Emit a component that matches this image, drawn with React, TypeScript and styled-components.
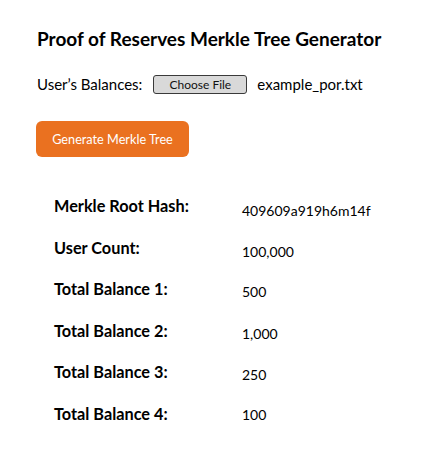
import React from "react";
import styled, { createGlobalStyle } from "styled-components";

const Global = createGlobalStyle`
  html, body { margin: 0; padding: 0; background: #ffffff; }
  body { font-family: Lato, "Open Sans", sans-serif; color: #000; }
`;

const Page = styled.div`
  padding: 27px 0 0 37px;
  width: 427px;
  height: 465px;
  box-sizing: border-box;
`;

const Title = styled.h1`
  margin: 0;
  font-size: 19px;
  font-weight: 700;
  line-height: 24px;
`;

const FileRow = styled.div`
  display: flex;
  align-items: center;
  margin-top: 23px;
  font-size: 15px;
  height: 20px;
`;

const FileLabel = styled.span`
  margin-right: 11px;
`;

const FileButton = styled.button`
  box-sizing: border-box;
  width: 94px;
  height: 19px;
  padding: 0;
  background: #d9d9d9;
  border: 1px solid #3a3a3a;
  border-radius: 3px;
  font-family: inherit;
  font-size: 12px;
  color: #111;
  margin-right: 10px;
`;

const FileName = styled.span``;

const Generate = styled.button`
  margin-top: 27px;
  width: 153px;
  height: 36px;
  border: none;
  border-radius: 6px;
  background: #ea7120;
  color: #fff;
  font-family: inherit;
  font-size: 12.7px;
  padding: 0;
  margin-left: -1px;
  display: block;
`;

const Results = styled.div`
  display: grid;
  grid-template-columns: 188px auto;
  grid-auto-rows: 41.6px;
  margin: 39px 0 0 17px;
`;

const Label = styled.div`
  font-weight: 700;
  font-size: 16.3px;
`;

const Value = styled.div<{ $shift: number }>`
  font-size: 14px;
  padding-top: ${(p) => p.$shift}px;
`;

const rows: [string, string, number][] = [
  ["Merkle Root Hash:", "409609a919h6m14f", 6],
  ["User Count:", "100,000", 5],
  ["Total Balance 1:", "500", 4],
  ["Total Balance 2:", "1,000", 4],
  ["Total Balance 3:", "250", 4],
  ["Total Balance 4:", "100", 2],
];

export default function App() {
  return (
    <>
      <Global />
      <Page>
        <Title>Proof of Reserves Merkle Tree Generator</Title>
        <FileRow>
          <FileLabel>User’s Balances:</FileLabel>
          <FileButton>Choose File</FileButton>
          <FileName>example_por.txt</FileName>
        </FileRow>
        <Generate>Generate Merkle Tree</Generate>
        <Results>
          {rows.map(([l, v, s]) => (
            <React.Fragment key={l}>
              <Label>{l}</Label>
              <Value $shift={s}>{v}</Value>
            </React.Fragment>
          ))}
        </Results>
      </Page>
    </>
  );
}
